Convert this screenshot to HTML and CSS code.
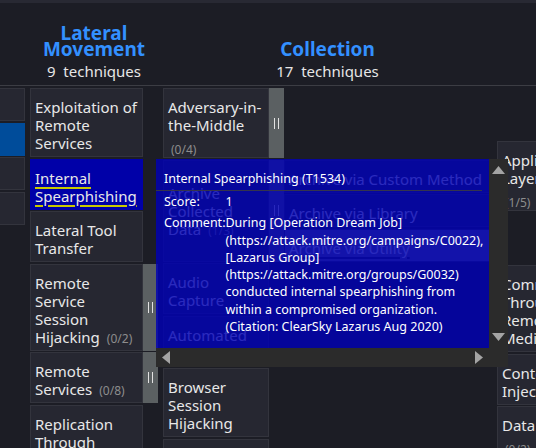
FILE: index.html
```html
<!DOCTYPE html>
<html>
<head>
<meta charset="utf-8">
<link rel="stylesheet" href="styles.css">
</head>
<body>
<div class="topstrip"></div>
<div class="page">
  <div class="hdr-row">
    <div class="hdr w-a"></div>
    <div class="hdr w-b">
      <div class="tname">Lateral<br>Movement</div>
      <div class="tcount">9&nbsp; techniques</div>
    </div>
    <div class="hdr w-c">
      <div class="tname">Collection</div>
      <div class="tcount">17&nbsp; techniques</div>
    </div>
    <div class="hdr w-d"></div>
  </div>

  <div class="cols">
    <div class="col w-a">
      <div class="cell">&nbsp;</div>
      <div class="cell blue">&nbsp;</div>
      <div class="cell">&nbsp;</div>
      <div class="cell">&nbsp;</div>
    </div>

    <div class="col w-b">
      <div class="row"><div class="cell">Exploitation of<br>Remote<br>Services</div><div class="side"></div></div>
      <div class="row"><div class="cell sel"><span class="ul">Internal<br>Spearphishing</span></div><div class="side"></div></div>
      <div class="row"><div class="cell">Lateral Tool<br>Transfer</div><div class="side"></div></div>
      <div class="row"><div class="cell">Remote<br>Service<br>Session<br>Hijacking<span class="cnt">(0/2)</span></div><div class="side on"><span class="grip"></span></div></div>
      <div class="row"><div class="cell">Remote<br>Services<span class="cnt">(0/8)</span></div><div class="side on"><span class="grip"></span></div></div>
      <div class="row"><div class="cell">Replication<br>Through<br>Removable<br>Media</div><div class="side"></div></div>
    </div>

    <div class="col w-c">
      <div class="row"><div class="cell cb">Adversary-in-<br>the-Middle<span class="cntb">(0/4)</span></div><div class="side on"><span class="grip"></span></div><div class="subs"></div></div>
      <div class="row"><div class="cell mid"><div>Archive<br>Collected<br>Data<span class="cnt">(1/3)</span></div></div><div class="side on"><span class="grip"></span></div>
        <div class="subs">
          <div class="cell sub">Archive via Custom Method</div>
          <div class="cell sub">Archive via Library</div>
          <div class="cell sub hl"><span class="ul2">Archive via Utility</span></div>
        </div>
      </div>
      <div class="row"><div class="cell">Audio<br>Capture</div><div class="side"></div><div class="subs"></div></div>
      <div class="row"><div class="cell">Automated<br>Collection</div><div class="side"></div><div class="subs"></div></div>
      <div class="row"><div class="cell">Browser<br>Session<br>Hijacking</div><div class="side"></div><div class="subs"></div></div>
      <div class="row"><div class="cell">Clipboard<br>Data</div><div class="side"></div><div class="subs"></div></div>
    </div>

    <div class="col w-d dcol">
      <div class="row"><div class="cell cb">Application<br>Layer Protocol<span class="cntb">(1/5)</span></div></div>
      <div class="row gapafter"></div>
      <div class="row"><div class="cell">Communication<br>Through<br>Removable<br>Media</div></div>
      <div class="row"><div class="cell">Content<br>Injection</div></div>
      <div class="row"><div class="cell cb">Data Encoding<span class="cntb">(0/2)</span></div></div>
    </div>
  </div>
</div>

<div class="tooltip">
  <div class="tt-body">
    <div class="tt-title">Internal Spearphishing (T1534)</div>
    <table class="tt-table">
      <tr><td class="lbl">Score:</td><td>1</td></tr>
      <tr><td class="lbl">Comment:</td><td>During [Operation Dream Job]<br>(https://attack.mitre.org/campaigns/C0022),<br>[Lazarus Group]<br>(https://attack.mitre.org/groups/G0032)<br>conducted internal spearphishing from<br>within a compromised organization.<br>(Citation: ClearSky Lazarus Aug 2020)</td></tr>
    </table>
  </div>
  <div class="vbar">
    <svg width="13" height="8" viewBox="0 0 13 8"><polygon points="0,8 6.5,0 13,8" fill="#a4a4a4"/></svg>
    <svg width="13" height="8" viewBox="0 0 13 8"><polygon points="0,0 13,0 6.5,8" fill="#a4a4a4"/></svg>
  </div>
  <div class="hbar">
    <svg width="8" height="13" viewBox="0 0 8 13"><polygon points="8,0 8,13 0,6.5" fill="#a4a4a4"/></svg>
    <svg width="8" height="13" viewBox="0 0 8 13"><polygon points="0,0 8,6.5 0,13" fill="#a4a4a4"/></svg>
  </div>
  <div class="corner"></div>
</div>
</body>
</html>
```
FILE: styles.css
```css
html, body {
  margin: 0;
  padding: 0;
}
body {
  background: #1c1d25;
  font-family: "Noto Sans", "Open Sans", sans-serif;
  width: 536px;
  height: 448px;
  overflow: hidden;
  position: relative;
}
.topstrip {
  height: 3px;
  background: #282933;
}
.page {
  overflow: hidden;
  width: 536px;
}
.hdr-row {
  display: flex;
  gap: 5px;
  margin-left: -20px;
  height: 83px;
  border-bottom: 1px solid #3c3d44;
  box-sizing: border-box;
}
.hdr {
  flex: none;
  display: flex;
  flex-direction: column;
  align-items: center;
  justify-content: flex-end;
  padding-bottom: 5px;
  box-sizing: border-box;
}
.tname {
  color: #3390ff;
  font-weight: 700;
  font-size: 19px;
  line-height: 16px;
  text-align: center;
}
.tcount {
  color: #e6e6e6;
  font-size: 15px;
  line-height: 18px;
  margin-top: 5px;
  white-space: nowrap;
}
.w-a { width: 45px; }
.w-b { width: 128px; }
.w-c { width: 329px; }
.w-d { width: 128px; }

.cols {
  display: flex;
  gap: 5px;
  margin-left: -20px;
  margin-top: 2px;
  align-items: flex-start;
}
.col {
  flex: none;
  display: flex;
  flex-direction: column;
  gap: 1.5px;
}
.row {
  display: flex;
}
.cell {
  box-sizing: border-box;
  background: #262731;
  border: 1px solid #33343d;
  padding: 9px 4px 4px;
  color: #e8e8e8;
  font-size: 15px;
  line-height: 18px;
  white-space: nowrap;
  overflow: hidden;
}
.w-a .cell { width: 45px; }
.w-b .cell { width: 113px; }
.w-c .cell { width: 106px; }
.w-d .cell { width: 113px; }
.w-c .subs .cell { width: 208px; }
.cell.blue {
  background: #004c9a;
  border-color: #004c9a;
}
.cell.sel {
  background: #0000a8;
  border-color: #0000a8;
}
.cell.cb { padding-bottom: 0; }
.cell.mid {
  display: flex;
  align-items: center;
  padding-top: 1px;
  padding-bottom: 0;
}
.cell.hl {
  background: #6c6c7a;
}
.ul {
  text-decoration: underline;
  text-decoration-color: #c9c900;
  text-decoration-thickness: 2px;
  text-underline-offset: 3px;
}
.ul2 {
  text-decoration: underline;
  text-decoration-color: #2a2a33;
  text-decoration-thickness: 2px;
  text-underline-offset: 3px;
}
.cnt {
  font-size: 12px;
  line-height: 0;
  color: #8d8d8d;
  margin-left: 7px;
}
.cntb {
  display: block;
  font-size: 12px;
  color: #8d8d8d;
  line-height: 14px;
  margin-top: 9px;
  padding-left: 3px;
}
.side {
  flex: none;
  width: 15px;
}
.side.on {
  background: #5b6062;
  display: flex;
  align-items: center;
  justify-content: center;
}
.grip {
  display: block;
  width: 3px;
  height: 11px;
  border-left: 1px solid #e2e2e2;
  border-right: 1px solid #e2e2e2;
}
.subs {
  flex: none;
  width: 208px;
  display: flex;
  flex-direction: column;
  gap: 1.5px;
}
.dcol { margin-top: 53px; }
.gapafter { height: 51px; }

.tooltip {
  position: absolute;
  left: 156px;
  top: 159px;
  display: grid;
  grid-template-columns: 333px 19px;
  grid-template-rows: 189px 19px;
  color: #ffffff;
  font-family: "Noto Sans", "Open Sans", sans-serif;
  font-size: 12.5px;
}
.tt-body {
  background: rgba(0, 0, 180, 0.82);
  overflow: hidden;
  padding-top: 11px;
}
.tt-title {
  line-height: 17px;
  padding: 0 0 3px 8px;
  margin-right: 7px;
  border-bottom: 1px solid #34344c;
  white-space: nowrap;
}
.tt-table {
  border-collapse: collapse;
  margin-left: 8px;
}
.tt-table td {
  padding: 2px 0;
  vertical-align: top;
  line-height: 17.3px;
  white-space: nowrap;
}
.tt-table td.lbl {
  line-height: 17px;
}
.vbar {
  background: #2b2b2b;
  display: flex;
  flex-direction: column;
  align-items: center;
  justify-content: space-between;
  padding: 7px 0 7px;
}
.hbar {
  background: #2b2b2b;
  display: flex;
  align-items: center;
  justify-content: space-between;
  padding: 0 6px 0 6px;
}
.corner {
  background: #2b2b2b;
}
.vbar svg, .hbar svg { display: block; }
```
